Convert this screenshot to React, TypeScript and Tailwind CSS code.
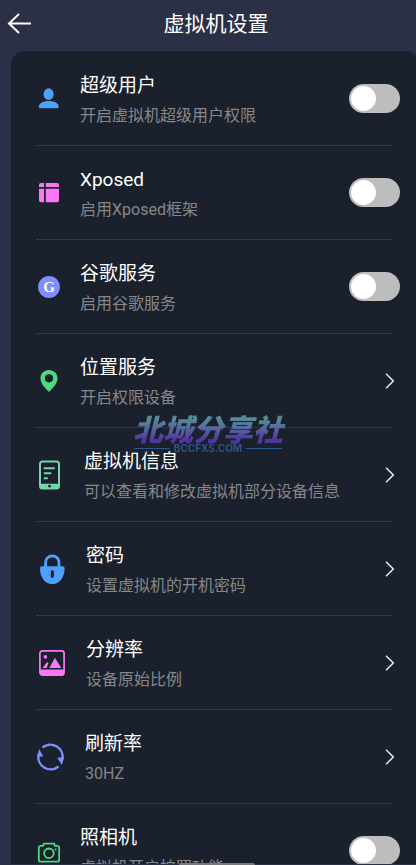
import { useState } from "react";
import type { ReactNode } from "react";

type Item = {
  id: string;
  title: string;
  desc: string;
  icon: ReactNode;
  toggle?: boolean;
};

function UserIcon() {
  return (
    <svg width="24" height="24" viewBox="0 0 24 24" fill="#4fa0fc">
      <ellipse cx="12.6" cy="7.2" rx="5" ry="5.9" />
      <path d="M2.8 19.6c0-3.3 4-5.7 10-5.7s10 2.4 10 5.700c0 1-.5 1.600-1.500 1.600H4.300c-1 0-1.500-.6-1.500-1.600z" />
    </svg>
  );
}

function LayoutIcon() {
  return (
    <svg width="24" height="24" viewBox="0 0 24 24" fill="#fb78f2">
      <path d="M5 2h3v4H3V4a2 2 0 0 1 2-2zM9.800 2H21a2 2 0 0 1 2 2v2H9.800zM3 7.700h5v13.500H5a2 2 0 0 1-2-2zM9.800 7.700H23v11.500a2 2 0 0 1-2 2H9.800z" />
    </svg>
  );
}

function GoogleIcon() {
  return (
    <svg width="24" height="24" viewBox="0 0 24 24">
      <circle cx="13" cy="12" r="10.900" fill="#7d8ffc" />
      <text
        x="13"
        y="17"
        textAnchor="middle"
        fill="#fff"
        className="font-['Liberation_Serif',serif] text-[15px] font-bold"
      >
        G
      </text>
    </svg>
  );
}

function PinIcon() {
  return (
    <svg width="24" height="24" viewBox="0 0 24 24">
      <path
        fill="#4cd980"
        fillRule="evenodd"
        d="M13 1c-4.800 0-8.500 3.600-8.500 8.200 0 5.300 4.700 9.800 8.500 13.800 3.800-4 8.500-8.500 8.500-13.800C21.500 4.600 17.800 1 13 1zm0 4.200a4.100 4.100 0 1 1 0 8.200 4.100 4.100 0 0 1 0-8.200z"
      />
    </svg>
  );
}

function PhoneIcon() {
  return (
    <svg width="28" height="30" viewBox="0 0 28 30" fill="none">
      <rect x="4" y="1.500" width="19" height="27" rx="2.500" stroke="#74d4a8" strokeWidth="2" />
      <path d="M7.800 8.300h11M7.800 13.300h7.500M7.800 18.300h4" stroke="#74d4a8" strokeWidth="2" />
      <path
        fill="#74d4a8"
        fillRule="evenodd"
        d="M4 23.800h19V27c0 1-.6 1.700-1.700 1.700H5.700C4.600 28.700 4 28 4 27zm9.500.9a1.500 1.500 0 1 0 0 3 1.500 1.500 0 0 0 0-3z"
      />
    </svg>
  );
}

function LockIcon() {
  return (
    <svg width="30" height="30" viewBox="0 0 30 30">
      <path
        d="M9.600 14V8.500a6.700 6.700 0 0 1 13.400 0V14"
        fill="none"
        stroke="#4fa0fc"
        strokeWidth="2.800"
      />
      <path
        fill="#4fa0fc"
        fillRule="evenodd"
        d="M6.300 12.200h20.100c1.400 0 2.200.7 2.200 2.200 0 7.800-4.300 15.500-12.300 15.500S4 22.200 4 14.400c0-1.500.8-2.200 2.300-2.200zm10 4.100c-.9 0-1.600.7-1.600 1.600v4.300a1.600 1.600 0 0 0 3.200 0v-4.300c0-.9-.7-1.600-1.600-1.600z"
      />
    </svg>
  );
}

function ImageIcon() {
  return (
    <svg width="30" height="30" viewBox="0 0 30 30">
      <rect x="3.900" y="2.900" width="24.200" height="24.200" rx="2.500" fill="none" stroke="#fb78f2" strokeWidth="1.700" />
      <path
        fill="#fb78f2"
        d="M4 21.600h24v3.600c0 1.200-.8 2-2 2H6c-1.200 0-2-.8-2-2zM13.300 20l5.600-10.300L25.300 20zM6.500 20l4.600-6 1.400 1.200L10.600 20z"
      />
      <circle cx="9.400" cy="8.900" r="1.800" fill="#fb78f2" />
    </svg>
  );
}

function RefreshIcon() {
  return (
    <svg width="29" height="30" viewBox="0 0 29 30">
      <path
        d="M6.500 5.500A12.300 12.300 0 0 1 26.500 17M22.500 24.500A12.300 12.300 0 0 1 2.500 13"
        fill="none"
        stroke="#7d8ffc"
        strokeWidth="2.500"
      />
      <path fill="#7d8ffc" d="M3.200 7L7.200 14.500l-6.300.2zM25.800 23L21.300 15.800l7-.5z" />
    </svg>
  );
}

function CameraIcon() {
  return (
    <svg width="24" height="24" viewBox="0 0 24 24" fill="none" stroke="#4cd980" strokeWidth="1.800">
      <path d="M8 4.700h10l1 2.200h2.200c1.200 0 2 .8 2 2v11.800c0 1.200-.8 2-2 2H4.800c-1.200 0-2-.8-2-2V8.900c0-1.200.8-2 2-2H7z" />
      <circle cx="12.900" cy="14.300" r="4.800" />
      <circle cx="19.600" cy="10.600" r="1" fill="#4cd980" stroke="none" />
    </svg>
  );
}

const items: Item[] = [
  { id: "root", title: "超级用户", desc: "开启虚拟机超级用户权限", icon: <UserIcon />, toggle: true },
  { id: "xposed", title: "Xposed", desc: "启用Xposed框架", icon: <LayoutIcon />, toggle: true },
  { id: "google", title: "谷歌服务", desc: "启用谷歌服务", icon: <GoogleIcon />, toggle: true },
  { id: "location", title: "位置服务", desc: "开启权限设备", icon: <PinIcon /> },
  { id: "info", title: "虚拟机信息", desc: "可以查看和修改虚拟机部分设备信息", icon: <PhoneIcon /> },
  { id: "password", title: "密码", desc: "设置虚拟机的开机密码", icon: <LockIcon /> },
  { id: "resolution", title: "分辨率", desc: "设备原始比例", icon: <ImageIcon /> },
  { id: "refresh", title: "刷新率", desc: "30HZ", icon: <RefreshIcon /> },
  { id: "camera", title: "照相机", desc: "虚拟机开启拍照功能", icon: <CameraIcon />, toggle: true },
];

function RowText({ item }: { item: Item }) {
  return (
    <>
      <span className="shrink-0">{item.icon}</span>
      <span className="flex min-w-0 flex-1 flex-col pt-1 text-left">
        <span className="text-[19px] leading-[30px] text-white">{item.title}</span>
        <span className="whitespace-nowrap text-base leading-[30px] text-[#868789]">{item.desc}</span>
      </span>
    </>
  );
}

function Row({ item }: { item: Item }) {
  const [on, setOn] = useState(false);

  if (item.toggle) {
    return (
      <label htmlFor={item.id} className="flex h-[93px] items-center gap-5 pl-[25px] pr-5">
        <RowText item={item} />
        <input
          id={item.id}
          type="checkbox"
          checked={on}
          onChange={(e) => setOn(e.target.checked)}
          className="h-[29px] w-[51px] shrink-0 appearance-none rounded-full bg-[#bdbdbd] p-[2px] before:block before:size-[25px] before:rounded-full before:bg-white checked:bg-[#4fa0fc] checked:before:ml-auto"
        />
      </label>
    );
  }

  return (
    <button type="button" className="flex h-[93px] w-full items-center gap-5 pl-[25px] pr-6">
      <RowText item={item} />
      <svg width="12" height="18" viewBox="0 0 12 18" fill="none" stroke="#e4e5e8" strokeWidth="1.600">
        <path d="M2 1.800L9.300 9 2 16.200" />
      </svg>
    </button>
  );
}

function Watermark() {
  return (
    <div className="pointer-events-none absolute inset-x-0 top-[413px] flex flex-col items-center">
      <p className="bg-linear-to-b from-[#578a99] from-20% to-[#5235a0] to-85% bg-clip-text px-1 font-['Noto_Sans_CJK_SC',sans-serif] text-[30px] font-black italic leading-[31px] text-transparent">
        北城分享社
      </p>
      <div className="flex items-center gap-1">
        <span className="h-px w-9 bg-[#29598a]" />
        <span className="font-[Inter,sans-serif] text-[10px] font-bold leading-[8px] text-[#2c5588]">BCCFXS.COM</span>
        <span className="h-px w-9 bg-[#29598a]" />
      </div>
    </div>
  );
}

export default function App() {
  return (
    <div className="relative flex h-screen flex-col overflow-hidden bg-[#2b3047] font-[Roboto,'Noto_Sans_CJK_SC',sans-serif]">
      <header className="grid h-[51px] shrink-0 grid-cols-[48px_1fr_32px] items-center pb-1">
        <button type="button" aria-label="返回" className="pl-[7px]">
          <svg width="26" height="24" viewBox="0 0 26 24" fill="none" stroke="#fff" strokeWidth="2">
            <path d="M12 2L2 11.500l10 9.500M2 11.500h22" />
          </svg>
        </button>
        <h1 className="text-center text-[21px] leading-[30px] text-white">虚拟机设置</h1>
      </header>

      <main className="-mr-1 ml-[11px] min-h-0 flex-1 overflow-y-auto rounded-t-[14px] bg-[#1b212c] pt-px [scrollbar-width:none]">
        <ul>
          {items.map((item) => (
            <li key={item.id}>
              <Row item={item} />
              <div className="ml-[25px] mr-[29px] h-px bg-[repeating-linear-gradient(90deg,#353d5c_0_3px,#232a3e_3px_4px)]" />
            </li>
          ))}
        </ul>
      </main>
      <div className="h-px shrink-0 bg-[#2b3047]" />

      <Watermark />
      <div className="absolute bottom-0 left-[43%] h-[2px] w-[76px] rounded-t-full bg-[#77797e]" />
    </div>
  );
}
